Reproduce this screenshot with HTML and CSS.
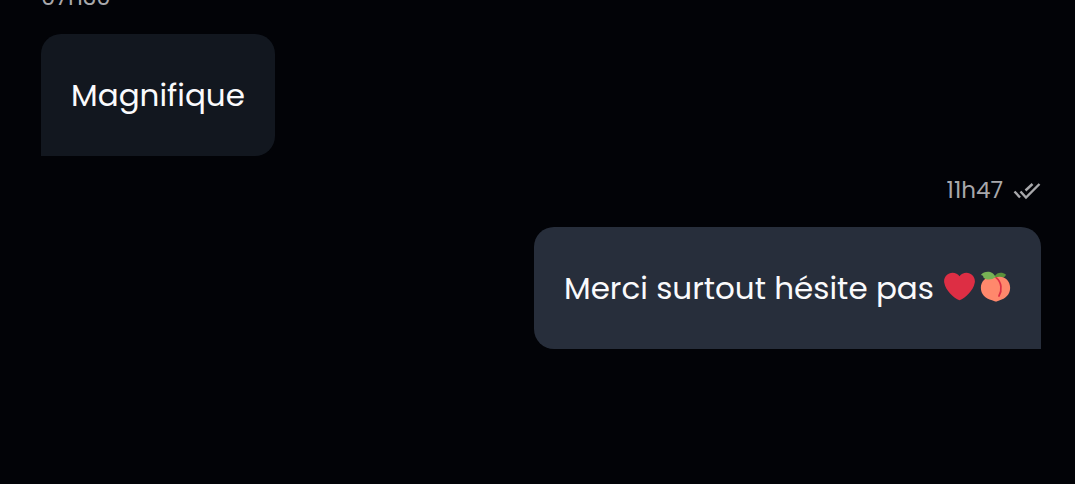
FILE: index.html
```html
<!DOCTYPE html>
<html lang="fr">
<head>
<meta charset="utf-8">
<meta name="viewport" content="width=device-width, initial-scale=1">
<title>Messages</title>
<link rel="stylesheet" href="styles.css">
</head>
<body>
<main class="chat">
  <article class="message received">
    <div class="meta"><time datetime="07:30">07h30</time></div>
    <p class="bubble">Magnifique</p>
  </article>
  <article class="message sent">
    <div class="meta">
      <time datetime="11:47">11h47</time>
      <svg class="checks" viewBox="0 0 28 20" role="img" aria-label="Lu">
        <path d="M1.500 11.500l5.500 6M7.500 11.500l5.500 6L26.500 4M12.500 10.500L19.500 4"/>
      </svg>
    </div>
    <p class="bubble">
      <span>Merci surtout hésite pas</span>
      <span class="emojis">
        <svg class="emoji" viewBox="0 0 36 36" role="img" aria-label="Cœur rouge">
          <path fill="#dd2e44" d="M35.885 11.833c0-5.450-4.418-9.868-9.867-9.868-3.308 0-6.227 1.633-8.018 4.129-1.791-2.496-4.710-4.129-8.017-4.129-5.450 0-9.868 4.417-9.868 9.868 0 .772.098 1.520.266 2.241C1.751 22.587 11.216 31.568 18 34.034c6.783-2.466 16.249-11.447 17.617-19.959.170-.721.268-1.469.268-2.242z"/>
        </svg>
        <svg class="emoji" viewBox="0 0 36 36" role="img" aria-label="Pêche">
          <path fill="#5c913b" d="M17 6c3-5 9-5 13-2 0 3-5 5-11 5z"/>
          <path fill="#ff886c" d="M18 7.500c9-3 17 3 17 12 0 8-6 13-12 14.500-2 .6-3 1.500-4.500 1.500S16 34.700 14 34C6 32 1 27 1 19.500 1 11 9 4.500 18 7.500z"/>
          <path fill="none" stroke="#dd2e44" stroke-width="2" stroke-linecap="round" d="M19 8c6 5 7 14 3 21"/>
          <path fill="#77b255" d="M1 4.500C5-.5 15-1 18 7c-4 4-12 3.500-14 .5 0-2-1-3-3-3z"/>
        </svg>
      </span>
    </p>
  </article>
</main>
</body>
</html>
```
FILE: styles.css
```css
* {
  box-sizing: border-box;
}

body {
  margin: 0;
  background: #020307;
  color: #fafafc;
  font-family: Poppins, Inter, "Liberation Sans", sans-serif;
}

.chat {
  display: flex;
  flex-direction: column;
  justify-content: flex-end;
  gap: 16px;
  height: 100vh;
  padding: 0 34px 135px 41px;
  overflow: hidden;
}

.message {
  display: flex;
  flex-direction: column;
  flex-shrink: 0;
  gap: 19px;
  max-width: 80%;
}

.received {
  align-self: flex-start;
  align-items: flex-start;
}

.sent {
  align-self: flex-end;
  align-items: flex-end;
}

.meta {
  display: flex;
  align-items: center;
  gap: 10px;
  color: #a8a8ab;
  font-size: 23px;
  line-height: 36px;
}

.checks {
  width: 28px;
  height: 20px;
  fill: none;
  stroke: currentColor;
  stroke-width: 2.4;
}

.bubble {
  display: flex;
  align-items: center;
  gap: 10px;
  margin: 0;
  padding: 37px 30px;
  border-radius: 20px;
  font-size: 31px;
  line-height: 48px;
}

.received .bubble {
  background: #12171f;
  border-bottom-left-radius: 0;
}

.sent .bubble {
  background: #272e3b;
  border-bottom-right-radius: 0;
}

.emojis {
  display: flex;
  gap: 5px;
  padding-bottom: 4px;
}

.emoji {
  width: 31px;
  height: 31px;
}
```
